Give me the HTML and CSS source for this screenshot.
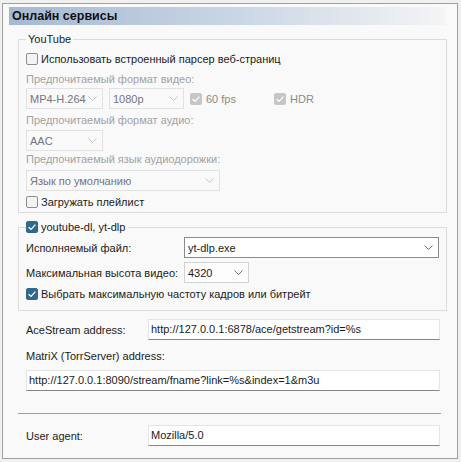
FILE: index.html
```html
<!DOCTYPE html>
<html>
<head>
<meta charset="utf-8">
<link rel="stylesheet" href="styles.css">
</head>
<body>
<div class="panel">
  <div class="header">Онлайн сервисы</div>
  <div class="content">
    <fieldset class="group yt">
      <legend>YouTube</legend>
      <div class="check-row r1"><span class="cb"></span><span>Использовать встроенный парсер веб-страниц</span></div>
      <div class="caption c-video">Предпочитаемый формат видео:</div>
      <div class="combo-row">
        <div class="combo dis w77"><span>MP4-H.264</span><svg class="chev" width="9" height="5" viewBox="0 0 9 5"><polyline points="0.5,0.5 4.5,4.5 8.5,0.5"/></svg></div>
        <div class="combo dis w75"><span>1080p</span><svg class="chev" width="9" height="5" viewBox="0 0 9 5"><polyline points="0.5,0.5 4.5,4.5 8.5,0.5"/></svg></div>
        <div class="dcheck w78"><span class="cb checked dis"><svg width="12" height="12" viewBox="0 0 12 12"><path d="M2.6 6.2 L5 8.4 L9.4 3.6"/></svg></span><span>60 fps</span></div>
        <div class="dcheck"><span class="cb checked dis"><svg width="12" height="12" viewBox="0 0 12 12"><path d="M2.6 6.2 L5 8.4 L9.4 3.6"/></svg></span><span>HDR</span></div>
      </div>
      <div class="caption c-audio">Предпочитаемый формат аудио:</div>
      <div class="combo dis w77 m-aac"><span>AAC</span><svg class="chev" width="9" height="5" viewBox="0 0 9 5"><polyline points="0.5,0.5 4.5,4.5 8.5,0.5"/></svg></div>
      <div class="caption c-lang">Предпочитаемый язык аудиодорожки:</div>
      <div class="combo dis w194 m-lang"><span>Язык по умолчанию</span><svg class="chev" width="9" height="5" viewBox="0 0 9 5"><polyline points="0.5,0.5 4.5,4.5 8.5,0.5"/></svg></div>
      <div class="check-row r-pl"><span class="cb"></span><span>Загружать плейлист</span></div>
    </fieldset>

    <fieldset class="group ytdl">
      <legend><span class="legend-in"><span class="cb checked"><svg width="12" height="12" viewBox="0 0 12 12"><path d="M2.6 6.2 L5 8.4 L9.4 3.6"/></svg></span><span>youtube-dl, yt-dlp</span></span></legend>
      <div class="field-row m-exe">
        <span class="lbl w158">Исполняемый файл:</span>
        <div class="combo edit w255"><span>yt-dlp.exe</span><svg class="chev" width="9" height="5" viewBox="0 0 9 5"><polyline points="0.5,0.5 4.5,4.5 8.5,0.5"/></svg></div>
      </div>
      <div class="field-row m-h">
        <span class="lbl w158">Максимальная высота видео:</span>
        <div class="combo plain w65"><span>4320</span><svg class="chev" width="9" height="5" viewBox="0 0 9 5"><polyline points="0.5,0.5 4.5,4.5 8.5,0.5"/></svg></div>
      </div>
      <div class="check-row r-max"><span class="cb checked"><svg width="12" height="12" viewBox="0 0 12 12"><path d="M2.6 6.2 L5 8.4 L9.4 3.6"/></svg></span><span>Выбрать максимальную частоту кадров или битрейт</span></div>
    </fieldset>

    <div class="plain-area">
      <div class="field-row m-ace">
        <span class="lbl w122">AceStream address:</span>
        <div class="input w292">http://127.0.0.1:6878/ace/getstream?id=%s</div>
      </div>
      <div class="caption c-matrix">MatriX (TorrServer) address:</div>
      <div class="input w414 m-mx">http://127.0.0.1:8090/stream/fname?link=%s&amp;index=1&amp;m3u</div>
    </div>
    <div class="separator"></div>
    <div class="plain-area">
      <div class="field-row m-ua">
        <span class="lbl w122">User agent:</span>
        <div class="input w292">Mozilla/5.0</div>
      </div>
    </div>
  </div>
</div>
</body>
</html>
```

FILE: styles.css
```css
* { box-sizing: border-box; }

body {
  margin: 0;
  background: #f0f0f0;
  font-family: "Liberation Sans", Arial, sans-serif;
  font-size: 11px;
  color: #1b1b1b;
}

.panel {
  margin: 3px 0 0 2px;
  width: 456px;
  height: 456px;
  border: 1px solid #a0a0a0;
  background: #f9f9f9;
}

.header {
  margin: 3px 0 0 6px;
  width: 436px;
  height: 18px;
  padding-left: 3px;
  line-height: 18px;
  font-size: 12.5px;
  font-weight: bold;
  color: #111;
  background: linear-gradient(to right, #a6b9d2 0%, #c8d5e4 50%, #f4f4f5 100%);
}

.content {
  padding: 0 10px 0 15px;
}

.group {
  margin: 0;
  padding: 0 7px;
  border: 1px solid #dcdcdc;
  min-width: 0;
}

.group legend {
  padding: 0 2px;
  height: 14px;
  line-height: 14px;
}

.yt { margin-top: 7px; padding-bottom: 1px; }
.ytdl { margin-top: 7px; padding-bottom: 7px; }
.ytdl legend { padding: 0 3px 0 0; }

.legend-in {
  display: flex;
  align-items: center;
  gap: 3px;
  height: 14px;
}

.cb {
  display: inline-block;
  flex: none;
  width: 12px;
  height: 12px;
  border: 1px solid #8d8d8d;
  border-radius: 2px;
  background: #f3f3f3;
}

.cb.checked {
  border-color: #2f6a8e;
  background: #2f6a8e;
}

.cb.checked.dis {
  border-color: #c6c6c6;
  background: #c6c6c6;
}

.cb svg {
  display: block;
  margin: -1px 0 0 -1px;
}

.cb svg path {
  fill: none;
  stroke: #fff;
  stroke-width: 1.3;
}

.check-row {
  display: flex;
  align-items: center;
  gap: 3px;
  height: 18px;
}

.r1 { margin-top: 4px; }
.r-pl { margin-top: 2px; }
.r-max { margin-top: 2px; }

.caption {
  height: 14px;
  line-height: 14px;
  white-space: nowrap;
}

.yt .caption { color: #a2a2a2; }

.c-video { margin-top: 4px; }
.c-audio { margin-top: 4px; }
.c-lang { margin-top: 1px; }
.c-matrix { margin-top: 9px; }

.combo-row {
  display: flex;
  align-items: center;
  gap: 6px;
  margin-top: 2px;
}

.combo {
  display: flex;
  align-items: center;
  justify-content: space-between;
  height: 21px;
  padding: 0 5px 0 3px;
  border: 1px solid #e2e2e2;
  white-space: nowrap;
}

.combo .chev polyline {
  fill: none;
  stroke: #6a6a6a;
  stroke-width: 1;
}

.combo.dis {
  color: #74747e;
  background: #f9f9f9;
}

.combo.dis .chev polyline { stroke: #c4c4c4; }

.combo.edit {
  background: #fff;
  border-color: #8a8a8a;
}

.combo.plain {
  background: #fdfdfd;
  border-color: #d2d2d2;
}

.m-aac { margin-top: 3px; }
.m-lang { margin-top: 4px; }

.dcheck {
  display: flex;
  align-items: center;
  gap: 4px;
  color: #8a8a8a;
}

.w65 { width: 65px; }
.w75 { width: 75px; }
.w77 { width: 77px; }
.w78 { width: 78px; }
.w122 { width: 122px; }
.w158 { width: 158px; }
.w194 { width: 194px; }
.w255 { width: 255px; }
.w292 { width: 292px; }
.w414 { width: 414px; }

.field-row {
  display: flex;
  align-items: center;
}

.lbl {
  flex: none;
  white-space: nowrap;
}

.m-exe { margin-top: 3px; }
.m-h { margin-top: 4px; }

.plain-area {
  padding-left: 8px;
}

.m-ace { margin-top: 8px; }

.input {
  height: 21px;
  line-height: 19px;
  padding-left: 2px;
  background: #fff;
  border: 1px solid #e4e4e4;
  border-bottom-color: #858585;
  white-space: nowrap;
  overflow: hidden;
}

.m-mx { margin-top: 7px; }

.separator {
  margin-top: 22px;
  width: 423px;
  height: 1px;
  background: #a0a0a0;
}

.m-ua { margin-top: 11px; }
```
